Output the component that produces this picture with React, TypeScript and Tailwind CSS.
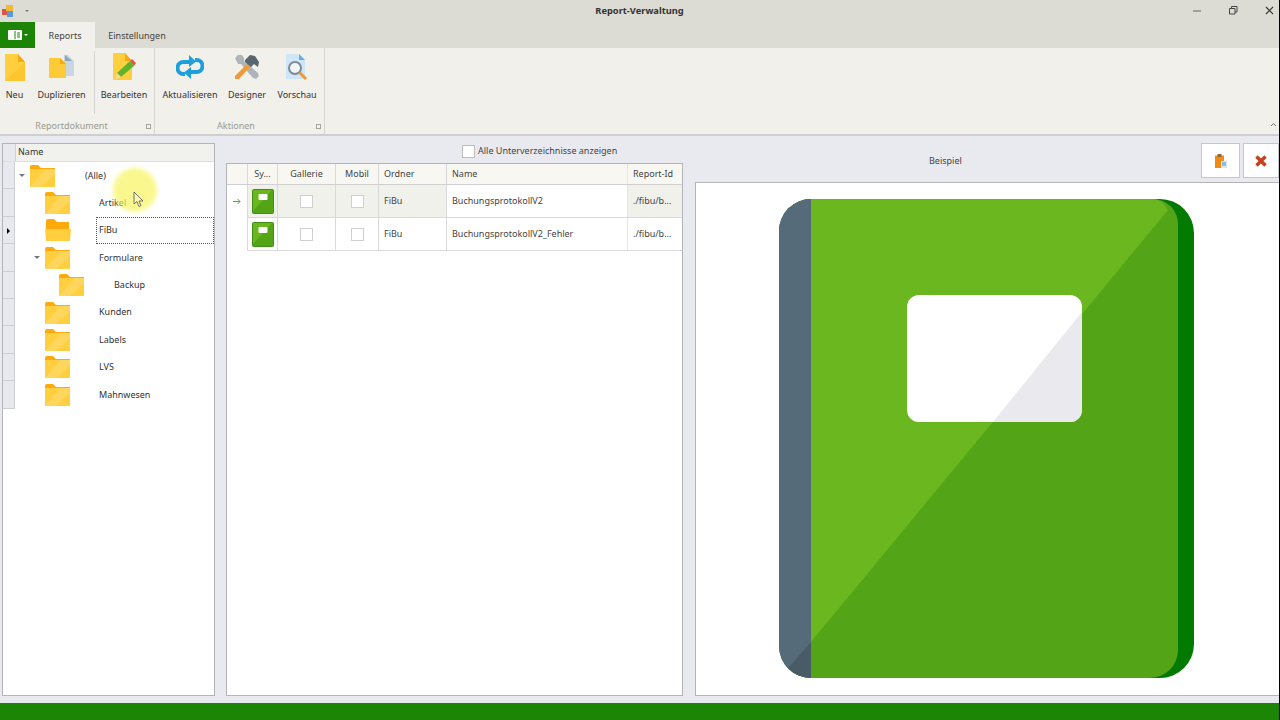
import React from 'react';

const FONT = '"Noto Sans", "Open Sans", sans-serif';

const PageIcon = () => (
  <svg width="20" height="27" viewBox="0 0 20 27">
    <path d="M0 0H13L20 8V27H0Z" fill="#ffcf40" />
    <path d="M0 27L20 8V27Z" fill="#fdc62f" />
    <path d="M13 0L20 8H13Z" fill="#f9a90f" />
  </svg>
);

const DuplicateIcon = () => (
  <svg width="25" height="24" viewBox="0 0 25 24">
    <path d="M15 0H19L25 6V21H15Z" fill="#c9d6e2" />
    <path d="M16 0L23 6H16Z" fill="#8fa6ba" />
    <path d="M0 3H11L17 9V23H0Z" fill="#fecb38" />
    <path d="M11 3L17 9H11Z" fill="#f9a90f" />
  </svg>
);

const EditIcon = () => (
  <svg width="24" height="28" viewBox="0 0 24 28">
    <path d="M1 0H13L20 8V27H1Z" fill="#ffcf40" />
    <path d="M13 0L20 8H13Z" fill="#f9a90f" />
    <path d="M5 20L18 8L22 13L9 24Z" fill="#62b32c" />
    <path d="M18 8L20 6L24 10L22 13Z" fill="#e2574c" />
    <path d="M5 20L9 24L3 26Z" fill="#f3d9a8" />
  </svg>
);

const RefreshIcon = () => (
  <svg width="28" height="24" viewBox="0 0 28 24" fill="none">
    <path d="M9 19H7.5A6 6 0 0 1 7.5 7H15" stroke="#1e9fdc" strokeWidth="4" />
    <path d="M19 5H20.5A6 6 0 0 1 20.5 17H13" stroke="#1e9fdc" strokeWidth="4" />
    <path d="M13 0L20 6.5L13 12Z" fill="#1e9fdc" />
    <path d="M15 12L8 17.5L15 24Z" fill="#1e9fdc" />
  </svg>
);

const ToolsIcon = () => (
  <svg width="26" height="26" viewBox="0 0 26 26">
    <path d="M1 4L4 1L8 1L10 4L10 7L24 19L25 22L22 25L19 24L7 10L4 10Z" fill="#aeb5ba" />
    <path d="M10 13L14 9L17 12L5 25L1 25L1 22Z" fill="#ef9a3a" />
    <path d="M11 6L16 1L21 2L25 8L24 13L20 10L17 13L11 8Z" fill="#56676f" />
  </svg>
);

const PreviewIcon = () => (
  <svg width="24" height="27" viewBox="0 0 24 27" fill="none">
    <path d="M1 0H14L20 6V25H1Z" fill="#cfe6f7" />
    <path d="M14 0L20 6H14Z" fill="#5fb0e6" />
    <circle cx="10" cy="14" r="6" fill="#f2f6f8" stroke="#7d8b96" strokeWidth="2" />
    <path d="M14.5 18.5L21 25" stroke="#ef9a3a" strokeWidth="3" />
  </svg>
);

const ClosedFolder = () => (
  <svg width="25" height="22" viewBox="0 0 25 22">
    <path d="M0 2Q0 0 2 0H8L11 3H25V22H0Z" fill="#ffa90a" />
    <path d="M0 4H25V22H0Z" fill="#ffcf40" />
    <path d="M0 22L16 4H25V9L11 22Z" fill="#ffd65c" />
  </svg>
);

const OpenFolder = () => (
  <svg width="26" height="22" viewBox="0 0 26 22">
    <path d="M1 2Q1 0 3 0H9L12 3H24V12H1Z" fill="#ffa90a" />
    <path d="M0 10H26L25 22H1Z" fill="#ffcf40" />
  </svg>
);

const BookThumb = () => (
  <svg width="22" height="25" viewBox="0 0 22 25">
    <rect width="22" height="25" rx="2" fill="#3f8f12" />
    <path d="M1 1H21V24H1Z" fill="#53a517" />
    <path d="M1 1H20L1 22Z" fill="#6ab71f" />
    <rect x="6.5" y="5" width="9" height="6" rx="1" fill="#fff" />
  </svg>
);

const ClipboardIcon = () => (
  <svg width="12" height="14" viewBox="0 0 12 14">
    <rect x="0" y="1.5" width="9" height="12.5" fill="#f08a12" />
    <rect x="2.5" y="0" width="4" height="3" fill="#8a6a3a" />
    <rect x="6" y="7" width="6" height="7" fill="#d7e8f5" />
    <path d="M7 9H11M7 11H11" stroke="#3d8fc9" strokeWidth="1" />
  </svg>
);

const RibbonButton = ({ icon, label, width }: { icon: React.ReactNode; label: string; width: string }) => (
  <div className={`flex flex-col items-center ${width}`}>
    <div className="h-[38px] flex items-center justify-center">{icon}</div>
    <span className="mt-[2px] text-[9px] leading-[14px] text-[#333] whitespace-nowrap">{label}</span>
  </div>
);

const GroupFooter = ({ label, pad }: { label: string; pad: string }) => (
  <div className={`absolute bottom-0 left-0 right-0 h-[16px] flex items-center justify-center text-[9px] text-[#9a9a92] ${pad}`}>
    {label}
    <span className="absolute right-[3px] top-[6px] w-[5px] h-[5px] border border-[#a5a5a0]" />
  </div>
);

const treeItems = [
  { label: '(Alle)', depth: 0, arrow: true },
  { label: 'Artikel', depth: 1 },
  { label: 'FiBu', depth: 1, open: true },
  { label: 'Formulare', depth: 1, arrow: true },
  { label: 'Backup', depth: 2 },
  { label: 'Kunden', depth: 1 },
  { label: 'Labels', depth: 1 },
  { label: 'LVS', depth: 1 },
  { label: 'Mahnwesen', depth: 1 },
];

const depthPad = ['pl-[15px]', 'pl-[30px]', 'pl-[44px]'];

const TreePanel = () => (
  <div className="relative w-[213px] h-[553px] ml-[2px] bg-white border border-[#b4b4b8] flex flex-col shrink-0">
    <div className="flex h-[18px] bg-[#f1f1ed] border-b border-[#dedee0] shrink-0">
      <div className="w-[13px] bg-[#e8e9ee] border-r border-[#cfcfd2]" />
      <span className="pl-[2px] text-[9px] leading-[15px] text-[#333]">Name</span>
    </div>
    <div className="flex flex-col">
      {treeItems.map((item) => (
        <div key={item.label} className="flex h-[27.4px]">
          <div className="w-[12px] bg-[#e8e9ee] border-b border-r border-[#cfcfd2] relative shrink-0">
            {item.open && (
              <span className="absolute left-[4px] top-[11px] w-0 h-0 border-y-[3px] border-y-transparent border-l-[3px] border-l-black" />
            )}
          </div>
          <div className={`flex-1 flex items-center relative ${depthPad[item.depth]}`}>
            {item.arrow && (
              <span className={`absolute top-[12px] w-0 h-0 border-x-[3px] border-x-transparent border-t-[3px] border-t-[#777] ${item.depth === 0 ? 'left-[4px]' : 'left-[19px]'}`} />
            )}
            <div className="w-[26px] flex shrink-0">{item.open ? <OpenFolder /> : <ClosedFolder />}</div>
            <span
              className={`absolute top-[6.5px] text-[9px] leading-[14px] text-[#333] ${
                item.depth === 0 ? 'left-[70px]' : item.depth === 1 ? 'left-[84px]' : 'left-[99px]'
              }`}
            >
              {item.label}
            </span>
            {item.open && (
              <span className="absolute left-[81px] right-0 top-[0px] bottom-[0px] border border-dotted border-[#555]" />
            )}
          </div>
        </div>
      ))}
    </div>
    {/* Mauszeiger mit Hervorhebung */}
    <div className="absolute left-[110px] top-[24px] w-[44px] h-[44px] rounded-full bg-[#f7f55e] opacity-70 blur-[2px]" />
    <svg className="absolute left-[130px] top-[47px]" width="11" height="17" viewBox="0 0 11 17">
      <path d="M1 1V13L4 10.5L6 15.5L8 14.5L6 10H10Z" fill="#fff8b0" stroke="#555" strokeWidth="0.8" />
    </svg>
  </div>
);

const gridCol = {
  handle: 'w-[21px]',
  sym: 'w-[30px]',
  gal: 'w-[58px]',
  mob: 'w-[43px]',
  ord: 'w-[68px]',
  name: 'w-[181px]',
};

const GridRow = ({ name, current }: { name: string; current?: boolean }) => (
  <div className="flex h-[33px] text-[9px] text-[#444]">
    <div className={`${gridCol.handle} flex items-center justify-center border-r border-[#d9d9d9]`}>
      {current && (
        <svg width="8" height="7" viewBox="0 0 8 7" fill="none">
          <path d="M0 3.5H7M4.5 1L7 3.5L4.5 6" stroke="#3fb52c" strokeWidth="1" />
        </svg>
      )}
    </div>
    <div className="flex flex-1 border-b border-[#d9d9d9]">
      <div className={`${gridCol.sym} flex items-center justify-center border-r border-[#d9d9d9] ${current ? 'bg-[#f1f1ec]' : ''}`}>
        <BookThumb />
      </div>
      <div className={`${gridCol.gal} flex items-center justify-center border-r border-[#d9d9d9] ${current ? 'bg-[#f1f1ec]' : ''}`}>
        <span className="w-[13px] h-[13px] bg-white border border-[#cfcfcf]" />
      </div>
      <div className={`${gridCol.mob} flex items-center justify-center border-r border-[#d9d9d9] ${current ? 'bg-[#f1f1ec]' : ''}`}>
        <span className="w-[13px] h-[13px] bg-white border border-[#cfcfcf]" />
      </div>
      <div className={`${gridCol.ord} flex items-center pl-[5px] border-r border-[#d9d9d9] ${current ? 'bg-[#f1f1ec]' : ''}`}>FiBu</div>
      <div className={`${gridCol.name} flex items-center pl-[5px] border-r border-[#e6e6e6]`}>{name}</div>
      <div className={`flex-1 flex items-center pl-[5px] ${current ? 'bg-[#f1f1ec]' : ''}`}>./fibu/b...</div>
    </div>
  </div>
);

const GridPanel = () => (
  <div className="flex flex-col w-[457px] ml-[11px] shrink-0">
    <div className="h-[20px] flex items-start pt-[2px] pl-[236px] text-[9px] leading-[12px] text-[#444]">
      <span className="w-[13px] h-[13px] bg-white border border-[#bdbdbd] mr-[3px] shrink-0" />
      <span className="whitespace-nowrap">Alle Unterverzeichnisse anzeigen</span>
    </div>
    <div className="h-[533px] bg-white border border-[#b4b4b8] flex flex-col">
      <div className="flex h-[21px] bg-[#f8f7f1] border-b border-[#d0d0d0] text-[9px] text-[#444] leading-[19px]">
        <div className={`${gridCol.handle} border-r border-[#d9d9d9]`} />
        <div className={`${gridCol.sym} text-center border-r border-[#d9d9d9]`}>Sy...</div>
        <div className={`${gridCol.gal} text-center border-r border-[#d9d9d9]`}>Gallerie</div>
        <div className={`${gridCol.mob} text-center border-r border-[#d9d9d9]`}>Mobil</div>
        <div className={`${gridCol.ord} pl-[5px] border-r border-[#d9d9d9]`}>Ordner</div>
        <div className={`${gridCol.name} pl-[5px] border-r border-[#e6e6e6]`}>Name</div>
        <div className="flex-1 pl-[5px]">Report-Id</div>
      </div>
      <GridRow name="BuchungsprotokollV2" current />
      <GridRow name="BuchungsprotokollV2_Fehler" />
    </div>
  </div>
);

const BookArt = () => (
  <svg width="415" height="479" viewBox="0 0 415 479">
    <path d="M32 0H381A34 34 0 0 1 415 34V445A34 34 0 0 1 381 479H32A32 32 0 0 1 0 447V32A32 32 0 0 1 32 0Z" fill="#027a00" />
    <path d="M32 0H374A25 25 0 0 1 399 25V451A28 28 0 0 1 371 479H32Z" fill="#53a517" />
    <path d="M32 0H374Q383 0 389 11L32 443Z" fill="#6ab71f" />
    <path d="M32 0V479A32 32 0 0 1 0 447V32A32 32 0 0 1 32 0Z" fill="#566b7a" />
    <path d="M32 443V479A32 32 0 0 1 9 469Z" fill="#4a5b68" />
    <rect x="128" y="96" width="175" height="127" rx="12" fill="#ffffff" />
    <path d="M303 113V211A12 12 0 0 1 291 223H214Z" fill="#e9e9ee" />
  </svg>
);

const PreviewPanel = () => (
  <div className="flex flex-col flex-1 ml-[12px] min-w-0">
    <div className="h-[39px] flex items-start relative">
      <span className="absolute left-[234px] top-[10.5px] text-[9px] leading-[14px] text-[#444]">Beispiel</span>
      <div className="ml-auto flex gap-[3px]">
        <div className="w-[39px] h-[35px] bg-white border border-[#c8c8c8] flex items-center justify-center">
          <ClipboardIcon />
        </div>
        <div className="w-[36px] h-[35px] bg-white border border-[#c8c8c8] flex items-center justify-center">
          <svg width="12" height="12" viewBox="0 0 12 12">
            <path d="M1.5 1.5L10.5 10.5M10.5 1.5L1.5 10.5" stroke="#c8401c" strokeWidth="3.5" />
          </svg>
        </div>
      </div>
    </div>
    <div className="h-[514px] bg-white border-t border-l border-b border-[#b4b4b8] flex flex-col pl-[83px] pt-[16px]">
      <BookArt />
    </div>
  </div>
);

export default function App() {
  return (
    <div className="w-[1280px] h-[720px] flex flex-col overflow-hidden bg-[#e9eaef] border-r border-black" style={{ fontFamily: FONT }}>
      {/* Titelleiste */}
      <div className="relative h-[22px] bg-[#dcdcd4] flex items-center shrink-0">
        <svg className="ml-[2px]" width="11" height="12" viewBox="0 0 11 12">
          <rect x="0" y="4" width="6" height="6" fill="#d9534f" />
          <rect x="4" y="0" width="7" height="6" fill="#f5b93a" />
          <rect x="5" y="6" width="6" height="6" fill="#5b9bd5" />
        </svg>
        <span className="ml-[12px] w-0 h-0 border-x-[2px] border-x-transparent border-t-[2px] border-t-[#777]" />
        <span className="absolute left-0 right-0 top-[4px] text-center text-[9.3px] leading-[14px] font-bold text-[#333]">Report-Verwaltung</span>
        <div className="ml-auto flex items-center gap-[27px] pr-[5px] pb-[2px] text-[#444]">
          <svg width="9" height="9" viewBox="0 0 9 9"><path d="M0 5H8" stroke="#777" strokeWidth="1.2" /></svg>
          <svg width="9" height="9" viewBox="0 0 9 9" fill="none"><path d="M0.5 2.5H6V8H0.5ZM2.5 2.5V0.5H8V6H6" stroke="#444" strokeWidth="1" /></svg>
          <svg width="9" height="9" viewBox="0 0 9 9"><path d="M1 1L8 8M8 1L1 8" stroke="#333" strokeWidth="1.1" /></svg>
        </div>
      </div>
      {/* Tabs */}
      <div className="h-[26px] bg-[#dcdcd4] flex shrink-0">
        <div className="w-[35px] bg-[#1c8505] flex items-center justify-center gap-[2px]">
          <svg width="14" height="10" viewBox="0 0 14 10">
            <rect width="14" height="10" rx="1" fill="#fff" />
            <path d="M7 1V9" stroke="#1c8505" />
            <path d="M9 3H12M9 5H12M9 7H12" stroke="#1c8505" />
          </svg>
          <span className="w-0 h-0 border-x-[2px] border-x-transparent border-t-[2px] border-t-white" />
        </div>
        <div className="w-[60px] bg-[#f1f0ea] text-center text-[9px] leading-[27px] text-[#444]">Reports</div>
        <div className="w-[84px] text-center text-[9px] leading-[27px] text-[#444]">Einstellungen</div>
      </div>
      {/* Ribbon */}
      <div className="relative h-[88px] bg-[#f1f0ea] border-b-2 border-[#cfcfd0] flex shrink-0">
        <div className="relative w-[155px] border-r border-[#d6d6d0] flex">
          <RibbonButton icon={<PageIcon />} label="Neu" width="w-[29px]" />
          <RibbonButton icon={<DuplicateIcon />} label="Duplizieren" width="w-[65px]" />
          <div className="w-px h-[63px] mt-[3px] bg-[#d6d6d0]" />
          <RibbonButton icon={<EditIcon />} label="Bearbeiten" width="w-[58px]" />
          <GroupFooter label="Reportdokument" pad="pr-[11px]" />
        </div>
        <div className="relative w-[170px] border-r border-[#d6d6d0] flex pl-[6px]">
          <RibbonButton icon={<RefreshIcon />} label="Aktualisieren" width="w-[58px]" />
          <RibbonButton icon={<ToolsIcon />} label="Designer" width="w-[56px]" />
          <RibbonButton icon={<PreviewIcon />} label="Vorschau" width="w-[44px]" />
          <GroupFooter label="Aktionen" pad="pr-[7px]" />
        </div>
        <svg className="absolute right-[2px] bottom-[7px]" width="7" height="5" viewBox="0 0 7 5" fill="none">
          <path d="M1 4L3.5 1.5L6 4" stroke="#777" />
        </svg>
      </div>
      {/* Inhalt */}
      <div className="flex-1 flex pt-[7px] min-h-0">
        <TreePanel />
        <GridPanel />
        <PreviewPanel />
      </div>
      <div className="h-[17px] bg-[#1c8505] shrink-0" />
    </div>
  );
}
